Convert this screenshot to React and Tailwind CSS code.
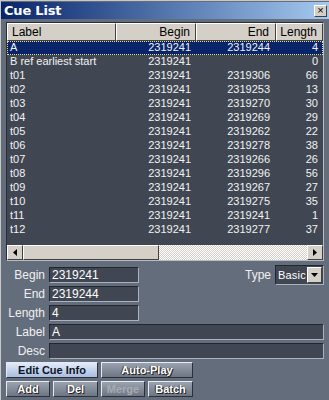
import React from 'react'

const rows = [
  ['A', '2319241', '2319244', '4'],
  ['B ref earliest start', '2319241', '', '0'],
  ['t01', '2319241', '2319306', '66'],
  ['t02', '2319241', '2319253', '13'],
  ['t03', '2319241', '2319270', '30'],
  ['t04', '2319241', '2319269', '29'],
  ['t05', '2319241', '2319262', '22'],
  ['t06', '2319241', '2319278', '38'],
  ['t07', '2319241', '2319266', '26'],
  ['t08', '2319241', '2319296', '56'],
  ['t09', '2319241', '2319267', '27'],
  ['t10', '2319241', '2319275', '35'],
  ['t11', '2319241', '2319241', '1'],
  ['t12', '2319241', '2319277', '37'],
]

const bevel = 'border border-t-[#ffffff] border-l-[#ffffff] border-b-[#404040] border-r-[#404040]'

function Field({ label, value, wide }) {
  return (
    <div className="flex items-center h-[16px] mb-[3px] text-[12px]">
      <span className="w-[39px] text-right text-[#f0f0f0]">{label}</span>
      <div
        className={`ml-[4px] h-[16px] bg-[#414752] border border-t-[#22262e] border-l-[#22262e] border-b-[#aab2c0] border-r-[#aab2c0] text-white leading-[14px] pl-[2px] ${wide ? 'flex-1' : 'w-[90px]'}`}
      >
        {value}
      </div>
    </div>
  )
}

function Btn({ children, w, active, disabled }) {
  return (
    <button
      className={`h-[16px] ${w} border border-t-[#e6eaf2] border-l-[#e6eaf2] border-b-[#2c3038] border-r-[#2c3038] font-bold text-[11px] leading-[13px] ${
        active
          ? 'bg-gradient-to-b from-[#e2eaf8] to-[#a9bddf] text-[#0c1424]'
          : 'bg-gradient-to-b from-[#9aa2ae] to-[#6e7684] ' + (disabled ? 'text-[#a7abb3]' : 'text-white [text-shadow:1px_1px_0_#222,-1px_0_0_#333]')
      }`}
    >
      {children}
    </button>
  )
}

export default function App() {
  return (
    <div className="w-[329px] h-[400px] overflow-hidden bg-[#646d7c] text-[11px] font-['Liberation_Sans',Arial,sans-serif] border-l border-t border-[#c8c8c8] select-none">
      {/* Title bar */}
      <div className="h-[17px] mt-[1px] flex items-center justify-between bg-gradient-to-r from-[#0a246a] to-[#a6caf0] pl-[3px] pr-[2px]">
        <span className="text-white font-bold text-[13px] font-['DejaVu_Sans',sans-serif] tracking-[-0.2px]">Cue List</span>
        <div className={`w-[13px] h-[12px] bg-[#d4d0c8] ${bevel} flex items-center justify-center text-[11px] leading-none text-black`}>
          ×
        </div>
      </div>

      <div className="px-[5px] pt-[3px]">
        {/* List */}
        <div className="h-[239px] bg-[#414752] border border-t-[#2a2e36] border-l-[#2a2e36] border-b-[#b8bcc4] border-r-[#b8bcc4] flex flex-col">
          <div className="flex h-[18px] text-[12px] text-black">
            <div className={`w-[109px] bg-[#d4d0c8] ${bevel} pl-[4px] leading-[16px]`}>Label</div>
            <div className={`w-[80px] bg-[#d4d0c8] ${bevel} text-right pr-[5px] leading-[16px]`}>Begin</div>
            <div className={`w-[80px] bg-[#d4d0c8] ${bevel} text-right pr-[6px] leading-[16px]`}>End</div>
            <div className={`flex-1 bg-[#d4d0c8] ${bevel} text-right pr-[5px] leading-[16px]`}>Length</div>
          </div>
          <div className="flex-1">
            {rows.map((r, i) => (
              <div
                key={i}
                className={`flex h-[14px] leading-[13px] text-[#f2f2f2] ${
                  i === 0 ? 'bg-[#0a246a] outline outline-1 outline-dotted outline-[#f0e080] -outline-offset-1' : ''
                }`}
              >
                <div className="w-[109px] pl-[3px]">{r[0]}</div>
                <div className="w-[80px] text-right pr-[5px]">{r[1]}</div>
                <div className="w-[80px] text-right pr-[6px]">{r[2]}</div>
                <div className="flex-1 text-right pr-[5px]">{r[3]}</div>
              </div>
            ))}
          </div>
          {/* Horizontal scrollbar */}
          <div className="h-[15px] flex">
            <div className={`w-[16px] bg-[#d4d0c8] ${bevel} flex items-center justify-center`}>
              <svg width="4" height="7" viewBox="0 0 4 7"><path d="M4 0L0 3.5L4 7Z" fill="#000" /></svg>
            </div>
            <div className={`w-[136px] bg-[#d4d0c8] ${bevel}`} />
            <div className="flex-1 bg-[repeating-conic-gradient(#d4d0c8_0_25%,#ffffff_0_50%)] bg-[length:2px_2px]" />
            <div className={`w-[16px] bg-[#d4d0c8] ${bevel} flex items-center justify-center`}>
              <svg width="4" height="7" viewBox="0 0 4 7"><path d="M0 0L4 3.5L0 7Z" fill="#000" /></svg>
            </div>
          </div>
        </div>

        {/* Form */}
        <div className="mt-[6px] relative">
          <Field label="Begin" value="2319241" />
          <Field label="End" value="2319244" />
          <Field label="Length" value="4" />
          <Field label="Label" value="A" wide />
          <Field label="Desc" value="" wide />

          <div className="absolute right-0 top-[-2px] flex items-center">
            <span className="text-[#f0f0f0] text-[12px] mr-[4px]">Type</span>
            <div className="w-[49px] h-[20px] bg-[#414752] border border-t-[#22262e] border-l-[#22262e] border-b-[#aab2c0] border-r-[#aab2c0] flex items-center">
              <span className="flex-1 text-white text-[11px] pl-[2px] tracking-[0.2px]">Basic</span>
              <div className={`w-[15px] h-[16px] mr-[1px] bg-[#d4d0c8] ${bevel} flex items-center justify-center`}>
                <svg width="7" height="4" viewBox="0 0 7 4"><path d="M0 0H7L3.5 4Z" fill="#000" /></svg>
              </div>
            </div>
          </div>
        </div>

        {/* Buttons */}
        <div className="mt-[2px] flex gap-[3px]">
          <Btn w="w-[92px]" active>Edit Cue Info</Btn>
          <Btn w="w-[92px]">Auto-Play</Btn>
        </div>
        <div className="mt-[3px] flex gap-[3px]">
          <Btn w="w-[44px]">Add</Btn>
          <Btn w="w-[45px]">Del</Btn>
          <Btn w="w-[44px]" disabled>Merge</Btn>
          <Btn w="w-[45px]">Batch</Btn>
        </div>
      </div>
    </div>
  )
}
